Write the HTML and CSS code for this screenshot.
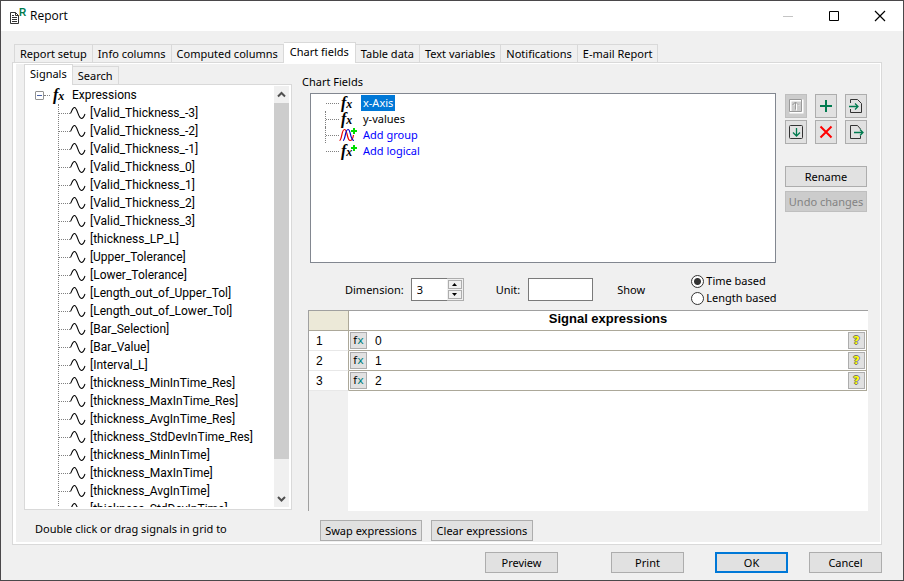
FILE: index.html
```html
<!DOCTYPE html>
<html lang="en">
<head>
<meta charset="utf-8">
<title>Report</title>
<link rel="stylesheet" href="styles.css">
</head>
<body>
<svg class="defs" aria-hidden="true">
  <symbol id="wave" viewBox="0 0 16 14"><path d="M0.500 7.500C2 5 2.500 1.500 4.500 1.500C7.500 1.500 8 12.500 11.500 12.500C13.500 12.500 14 10.500 15 8" fill="none" stroke="#000" stroke-width="1.1"/></symbol>
</svg>
<div class="window">
  <header class="titlebar">
    <span class="app-icon">
      <svg width="9" height="12" viewBox="0 0 9 12" fill="none" stroke="#333"><path d="M0.500 0.500H5.500L8.500 3.500V11.500H0.500ZM5.500 0.500V3.500H8.500M2 3.500H4M2 5.500H7M2 7.500H7M2 9.500H7"/></svg>
      <b>R</b>
    </span>
    <h1>Report</h1>
    <div class="win-controls">
      <button aria-label="Minimize" disabled><svg width="12" height="12"><path d="M1 6.500H11" stroke="#c4c4c4"/></svg></button>
      <button aria-label="Maximize"><svg width="12" height="12"><path d="M1.500 1.500H10.500V10.500H1.500Z" fill="none" stroke="#000"/></svg></button>
      <button aria-label="Close"><svg width="12" height="12"><path d="M1 1L11 11M11 1L1 11" stroke="#000" stroke-width="1.200"/></svg></button>
    </div>
  </header>

  <main class="content">
    <nav class="tabs main-tabs" role="tablist">
      <button role="tab">Report setup</button>
      <button role="tab">Info columns</button>
      <button role="tab">Computed columns</button>
      <button role="tab" class="active" aria-selected="true">Chart fields</button>
      <button role="tab">Table data</button>
      <button role="tab">Text variables</button>
      <button role="tab">Notifications</button>
      <button role="tab">E-mail Report</button>
    </nav>

    <div class="panel">
      <section class="signals">
        <nav class="tabs side-tabs" role="tablist">
          <button role="tab" class="active" aria-selected="true">Signals</button>
          <button role="tab">Search</button>
        </nav>
        <div class="tree-pane">
          <div class="tree">
            <div class="root"><span class="toggle"></span><i class="dots"></i><span class="fx">f<small>x</small></span><span>Expressions</span></div>
            <ul>
              <li><svg><use href="#wave"/></svg>[Valid_Thickness_-3]</li>
              <li><svg><use href="#wave"/></svg>[Valid_Thickness_-2]</li>
              <li><svg><use href="#wave"/></svg>[Valid_Thickness_-1]</li>
              <li><svg><use href="#wave"/></svg>[Valid_Thickness_0]</li>
              <li><svg><use href="#wave"/></svg>[Valid_Thickness_1]</li>
              <li><svg><use href="#wave"/></svg>[Valid_Thickness_2]</li>
              <li><svg><use href="#wave"/></svg>[Valid_Thickness_3]</li>
              <li><svg><use href="#wave"/></svg>[thickness_LP_L]</li>
              <li><svg><use href="#wave"/></svg>[Upper_Tolerance]</li>
              <li><svg><use href="#wave"/></svg>[Lower_Tolerance]</li>
              <li><svg><use href="#wave"/></svg>[Length_out_of_Upper_Tol]</li>
              <li><svg><use href="#wave"/></svg>[Length_out_of_Lower_Tol]</li>
              <li><svg><use href="#wave"/></svg>[Bar_Selection]</li>
              <li><svg><use href="#wave"/></svg>[Bar_Value]</li>
              <li><svg><use href="#wave"/></svg>[Interval_L]</li>
              <li><svg><use href="#wave"/></svg>[thickness_MinInTime_Res]</li>
              <li><svg><use href="#wave"/></svg>[thickness_MaxInTime_Res]</li>
              <li><svg><use href="#wave"/></svg>[thickness_AvgInTime_Res]</li>
              <li><svg><use href="#wave"/></svg>[thickness_StdDevInTime_Res]</li>
              <li><svg><use href="#wave"/></svg>[thickness_MinInTime]</li>
              <li><svg><use href="#wave"/></svg>[thickness_MaxInTime]</li>
              <li><svg><use href="#wave"/></svg>[thickness_AvgInTime]</li>
              <li><svg><use href="#wave"/></svg>[thickness_StdDevInTime]</li>
            </ul>
          </div>
          <div class="scrollbar">
            <svg width="15" height="17"><path d="M4 10.500L7.500 7L11 10.500" fill="none" stroke="#505050" stroke-width="2"/></svg>
            <div class="thumb"></div>
            <svg width="15" height="17"><path d="M4 7L7.500 10.500L11 7" fill="none" stroke="#505050" stroke-width="2"/></svg>
          </div>
        </div>
        <p class="hint">Double click or drag signals in grid to</p>
      </section>

      <section class="fields">
        <h2>Chart Fields</h2>
        <div class="fields-row">
          <ul class="field-tree">
            <li><span class="fx">f<small>x</small></span><span class="selected">x-Axis</span></li>
            <li><span class="fx">f<small>x</small></span><span>y-values</span></li>
            <li class="add"><svg class="group" width="18" height="14" viewBox="0 0 18 14" fill="none"><path d="M0.500 12.500C3 12 2.500 1.500 5.500 1.500C8.500 1.500 8 12.500 11 12.500C13 12.500 14 10 14.500 7" stroke="#e00" stroke-width="1.200"/><path d="M4 12.500C6.500 12 6 1.500 9 1.500C12 1.500 11 12.500 15 12.500" stroke="#00c" stroke-width="1.200"/><path d="M12 3H18M15 0V6" stroke="#0d0" stroke-width="2"/></svg><span>Add group</span></li>
            <li class="add"><span class="fx">f<small>x</small><svg class="plus" width="6" height="6"><path d="M0 3H6M3 0V6" stroke="#0d0" stroke-width="2"/></svg></span><span>Add logical</span></li>
          </ul>
          <div class="actions">
            <div class="tools">
              <button disabled aria-label="Move up"><svg width="16" height="16" fill="none"><path d="M2.500 2.500H14.500V14.500H2.500Z" stroke="#fff" stroke-width="2"/><path d="M1.500 1.500H13.500V13.500H1.500Z" stroke="#999"/><path d="M8.500 12.500V5M6 7.500L8.500 5L11 7.500" stroke="#fff"/><path d="M7.500 11.500V4M4.500 7L7.500 4L10.500 7" stroke="#999"/></svg></button>
              <button aria-label="Add"><svg width="16" height="16"><path d="M2 8H14M8 2V14" stroke="#007b4f" stroke-width="2"/></svg></button>
              <button aria-label="Import"><svg width="16" height="16" fill="none"><path d="M2.500 5V1.500H9.500L13.500 5.500V14.500H2.500V11" stroke="#333"/><path d="M1 8.500H10M7 5.500L10 8.500L7 11.500" stroke="#007b4f" stroke-width="1.300"/></svg></button>
              <button aria-label="Move down"><svg width="16" height="16" fill="none"><rect x="1.500" y="1.500" width="13" height="13" rx="1" stroke="#333"/><path d="M8.500 4V12M5 8.500L8.500 12L12 8.500" stroke="#007b4f" stroke-width="1.300"/></svg></button>
              <button aria-label="Delete"><svg width="16" height="16"><path d="M2.500 2.500L13.500 13.500M13.500 2.500L2.500 13.500" stroke="#f00" stroke-width="2"/></svg></button>
              <button aria-label="Export"><svg width="16" height="16" fill="none"><path d="M12.500 5L9.500 1.500H2.500V14.500H12.500V12" stroke="#333"/><path d="M6 8.500H15M12 5.500L15 8.500L12 11.500" stroke="#007b4f" stroke-width="1.300"/></svg></button>
            </div>
            <button class="btn">Rename</button>
            <button class="btn" disabled>Undo changes</button>
          </div>
        </div>

        <div class="options">
          <label for="dim">Dimension:</label>
          <div class="spinner">
            <input id="dim" type="text" value="3">
            <div class="spin"><button aria-label="Increase"><svg width="5" height="3"><path d="M0 3L2.500 0L5 3Z"/></svg></button><button aria-label="Decrease"><svg width="5" height="3"><path d="M0 0L2.500 3L5 0Z"/></svg></button></div>
          </div>
          <label for="unit">Unit:</label>
          <input id="unit" type="text">
          <span class="show">Show</span>
          <div class="radios">
            <label><input type="radio" name="base" checked>Time based</label>
            <label><input type="radio" name="base">Length based</label>
          </div>
        </div>

        <div class="grid">
          <table>
            <thead><tr><td class="corner"></td><th>Signal expressions</th></tr></thead>
            <tbody>
              <tr><td>1</td><td><div class="cell"><button class="mini">f<em>x</em></button><span>0</span><button class="mini help">?</button></div></td></tr>
              <tr><td>2</td><td><div class="cell"><button class="mini">f<em>x</em></button><span>1</span><button class="mini help">?</button></div></td></tr>
              <tr><td>3</td><td><div class="cell"><button class="mini">f<em>x</em></button><span>2</span><button class="mini help">?</button></div></td></tr>
            </tbody>
          </table>
          <div class="gutter"></div>
        </div>
        <div class="grid-actions">
          <button class="btn">Swap expressions</button>
          <button class="btn">Clear expressions</button>
        </div>
      </section>
    </div>
  </main>

  <footer class="footer">
    <button class="btn preview">Preview</button>
    <button class="btn print">Print</button>
    <button class="btn default">OK</button>
    <button class="btn">Cancel</button>
  </footer>
</div>
</body>
</html>
```
FILE: styles.css
```css
* { box-sizing: border-box; }
body {
  margin: 0;
  font: 11px/14px "Noto Sans", Tahoma, sans-serif;
  color: #000;
}
button, input { font: inherit; color: inherit; margin: 0; }
ul, p, h1, h2 { margin: 0; padding: 0; list-style: none; font-size: inherit; font-weight: normal; }
svg { display: block; flex: none; }
.defs { display: none; }

.window {
  display: flex;
  flex-direction: column;
  height: 100vh;
  border: 1px solid #4a484a;
  background: #f0f0f0;
}

.titlebar {
  display: flex;
  align-items: center;
  height: 30px;
  flex: none;
  padding-left: 9px;
  background: #fff;
  font: 12px/16px "Open Sans", sans-serif;
}
.app-icon { display: flex; align-items: center; width: 20px; }
.app-icon svg { margin-top: 4px; }
.app-icon b { font: bold 10px/10px "Liberation Sans", sans-serif; color: #007b4f; align-self: flex-start; }
.win-controls { display: flex; margin-left: auto; }
.win-controls button {
  display: grid;
  place-items: center;
  width: 46px;
  height: 28px;
  padding: 0;
  border: 0;
  background: none;
}

.content {
  display: flex;
  flex-direction: column;
  flex: 1;
  min-height: 0;
  padding: 11px 21px 0 11px;
}

.tabs { display: flex; align-items: flex-end; position: relative; }
.tabs button {
  height: 18px;
  padding: 0 5px;
  border: 1px solid #d9d9d9;
  border-width: 1px 1px 0 0;
  background: #f0f0f0;
  white-space: nowrap;
}
.tabs button:first-child { border-left-width: 1px; }
.tabs button.active { height: 20px; background: #fff; padding-bottom: 3px; }
.main-tabs { padding-left: 2px; }
.main-tabs button.active { height: 21px; padding: 0 6px 3px; margin-bottom: -1px; }

.panel {
  display: flex;
  flex: 1;
  min-height: 0;
  border: 1px solid #d9d9d9;
  background: #f0f0f0;
  box-shadow: inset 3px -2px #fff, inset -1px 1px #fff;
}

.signals {
  display: flex;
  flex-direction: column;
  flex: 0 0 279px;
  padding: 1px 0 0 11px;
}
.side-tabs button.active { margin-bottom: -1px; height: 21px; }
.tree-pane {
  display: flex;
  flex: 1;
  min-height: 0;
  padding: 1px 2px 2px;
  border: 1px solid #d9d9d9;
  background: #fff;
}
.tree {
  flex: 1;
  overflow: hidden;
  font: 12px/18px Roboto, sans-serif;
}
.root { display: flex; align-items: center; height: 18px; padding-left: 8px; }
.root span:last-child { margin-left: 5px; }
.toggle {
  width: 9px;
  height: 9px;
  border: 1px solid #919191;
  border-radius: 1px;
  background: linear-gradient(#4b63a7, #4b63a7) center / 5px 1px no-repeat #fff;
}
.dots { width: 6px; margin-right: 1px; border-top: 1px dotted #808080; }
.tree ul { margin-left: 31px; border-left: 1px dotted #808080; }
.tree li { display: flex; align-items: center; height: 18px; white-space: nowrap; }
.tree li::before { content: ""; width: 11px; border-top: 1px dotted #808080; }
.tree li svg { width: 16px; height: 14px; margin-right: 4px; }
.fx {
  display: flex;
  align-items: flex-end;
  position: relative;
  width: 16px;
  padding-left: 2px;
  font: italic bold 16px/16px "Liberation Serif", serif;
  color: #000;
}
.fx small { font-size: 12px; line-height: 13px; }
.fx .plus { position: absolute; right: -2px; top: 2px; }

.scrollbar { display: flex; flex-direction: column; width: 15px; background: #f0f0f0; }
.thumb { flex: 0 1 356px; background: #cdcdcd; }
.scrollbar svg:last-child { margin-top: auto; }
.hint { padding: 12px 0 8px 11px; }

.fields {
  display: flex;
  flex-direction: column;
  flex: 1;
  min-width: 0;
  padding: 12px 13px 0 10px;
}
.fields-row { display: flex; gap: 9px; padding: 4px 1px 0 8px; }
.field-tree {
  flex: 1;
  height: 170px;
  padding: 1px 0 0 14px;
  border: 1px solid #828790;
  background: #fff;
}
.field-tree li { display: flex; align-items: center; height: 16px; border-left: 1px dotted #808080; }
.field-tree li:first-child, .field-tree li:last-child { border-left: 0; background: linear-gradient(#808080, #808080) 0 100% / 1px 0 no-repeat; padding-left: 1px; }
.field-tree li::before { content: ""; width: 13px; border-top: 1px dotted #808080; }
.field-tree li > span:last-child { padding: 0 2px; margin-left: 6px; line-height: 16px; }
.field-tree .group { margin-right: -2px; }
.field-tree .selected { background: #0078d7; color: #fff; }
.add { color: #00f; }

.actions { display: flex; flex-direction: column; gap: 4px; padding-top: 1px; width: 82px; }
.tools { display: grid; grid-template-columns: repeat(3, 22px); gap: 2px 8px; margin-bottom: 18px; }
.tools button {
  display: grid;
  place-items: center;
  height: 24px;
  padding: 0;
  border: 1px solid #adadad;
  background: #e1e1e1;
}
.btn {
  height: 21px;
  padding: 0;
  border: 1px solid #adadad;
  background: #e1e1e1;
  white-space: nowrap;
}
.tools button:disabled, .btn:disabled { background: #ccc; border-color: #bfbfbf; color: #838383; }

.options { display: flex; align-items: center; padding: 11px 0 5px 43px; }
.options input[type="text"] { height: 23px; border: 1px solid #7a7a7a; background: #fff; }
.spinner { display: flex; width: 53px; margin: 0 32px 0 7px; }
.spinner input { width: 36px; padding: 0 5px; border-right: 0 !important; }
.spin { display: flex; flex-direction: column; gap: 1px; flex: 1; padding: 1px; border: 1px solid #adadad; border-left: 0; }
.spin button { display: grid; place-items: center; flex: 1; padding: 0; border: 1px solid #adadad; background: #f0f0f0; }
#unit { width: 65px; margin: 0 24px 0 8px; }
.show { width: 74px; }
.radios { display: grid; gap: 3px; }
.radios label { display: flex; align-items: center; gap: 2px; height: 14px; }
.radios input {
  appearance: none;
  width: 13px;
  height: 13px;
  border: 1px solid #333;
  border-radius: 50%;
  background: #fff;
}
.radios input:checked { background: radial-gradient(#333 3px, #fff 4px); }

.grid {
  display: flex;
  flex-direction: column;
  flex: 1;
  min-height: 0;
  margin-left: 6px;
  border-left: 1px solid #a0a0a0;
  border-top: 1px solid #a0a0a0;
  background: #fff;
}
table { width: 100%; padding-right: 1px; border-collapse: separate; border-spacing: 0; table-layout: fixed; }
td, th { height: 20px; padding: 0; border-bottom: 1px solid #aca899; }
th { padding-bottom: 4px; font: bold 13px/14px "Liberation Sans", sans-serif; }
td:first-child { width: 40px; border-right: 1px solid #aca899; }
tbody td { font: 12px/16px "Liberation Sans", sans-serif; }
tbody td:first-child { padding-left: 7px; border-bottom-color: #e8e8e8; }
tbody td:last-child { border-right: 1px solid #aca899; }
.corner { background: #ece9d8; }
.cell { display: flex; align-items: center; padding: 0 1px; }
.cell span { flex: 1; padding-left: 8px; }
.mini {
  width: 17px;
  height: 17px;
  padding: 0;
  border: 1px solid #adadad;
  background: #e1e1e1;
  font: 11px/13px "DejaVu Sans", sans-serif;
}
.mini em { font-style: normal; color: #008080; }
.help { color: #ff0; font-weight: bold; text-shadow: 1px 0 #777, -1px 0 #777, 0 1px #777, 0 -1px #777; }
.gutter { flex: 1; width: 39px; background: #f0f0f0; }
.grid-actions { display: flex; gap: 9px; padding: 9px 0 3px 18px; }
.grid-actions .btn { width: 102px; }

.footer { display: flex; justify-content: flex-end; gap: 21px; padding: 7px 21px 7px 0; }
.footer .btn { width: 73px; }
.footer .preview { margin-right: 32px; }
.footer .print { margin-right: 10px; }
.footer .default { border: 2px solid #0078d7; }
```
